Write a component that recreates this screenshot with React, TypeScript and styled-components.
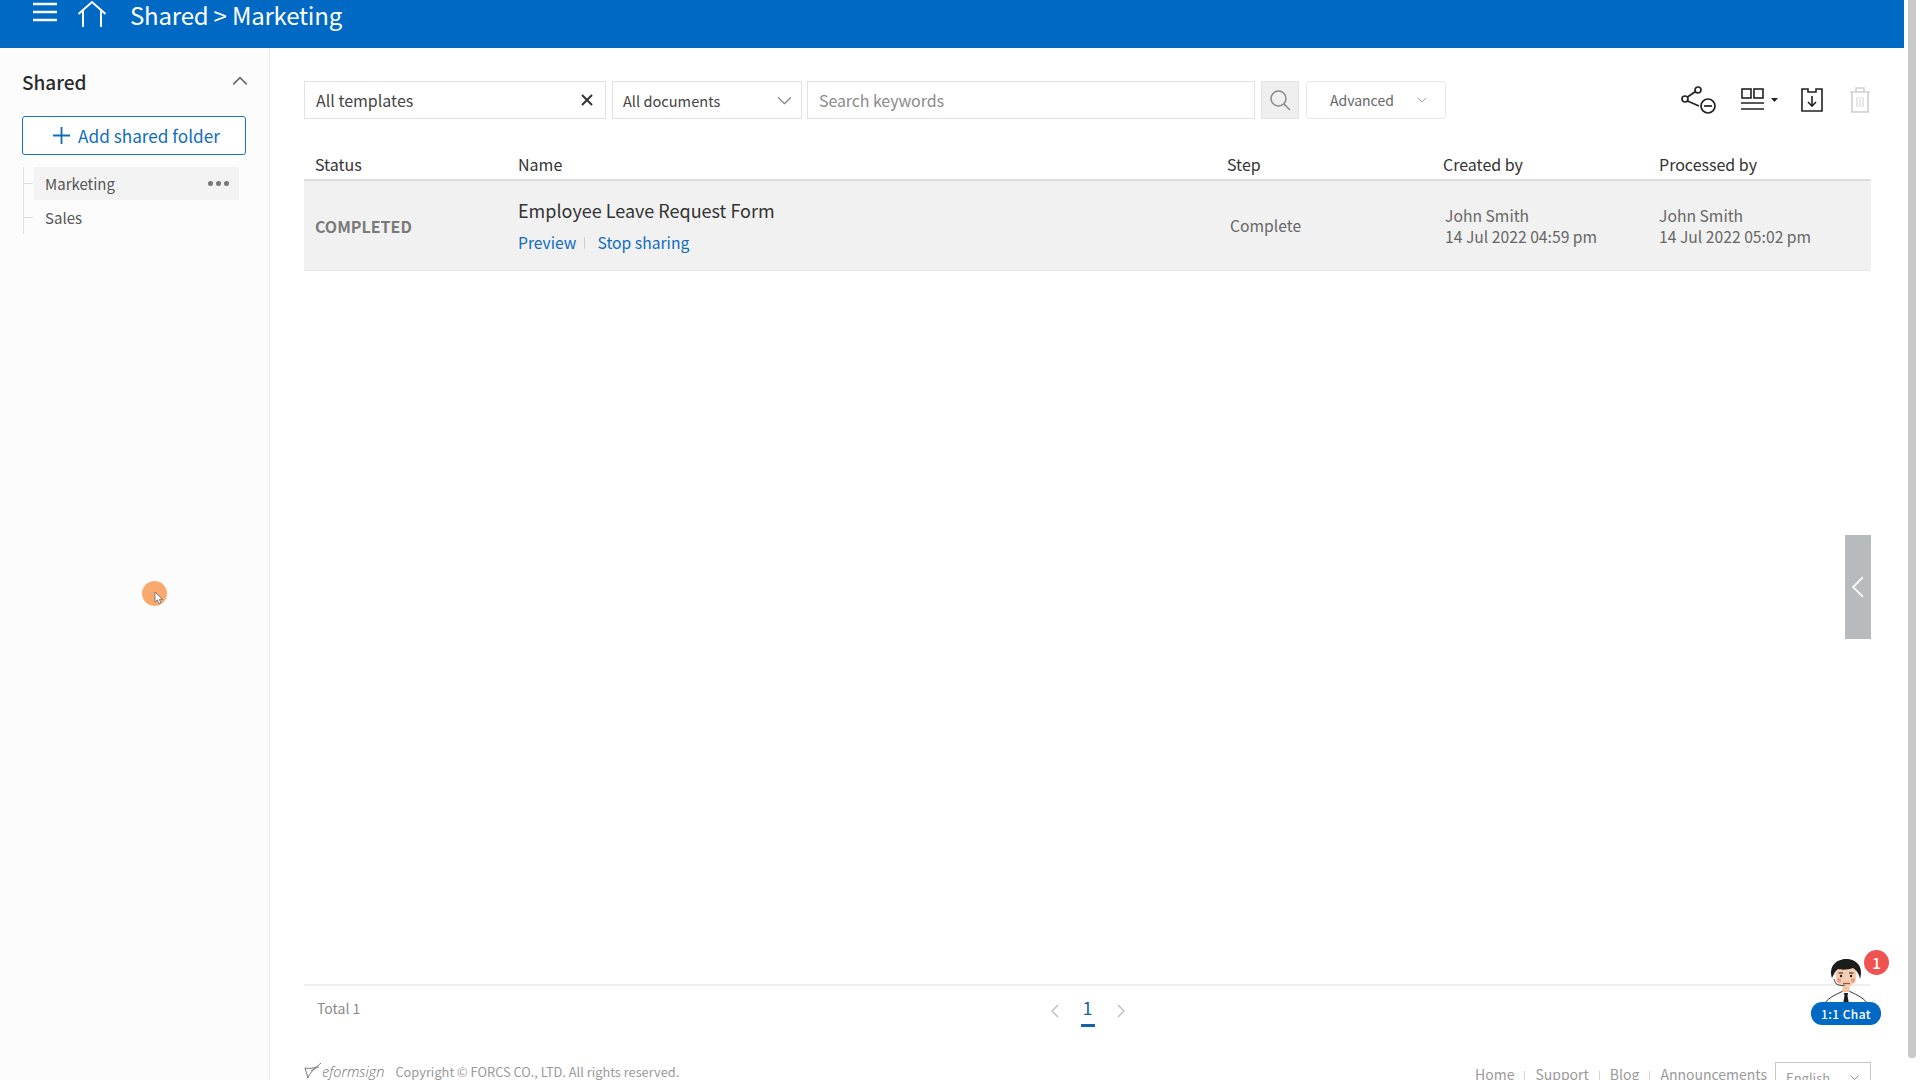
import React from 'react';
import styled, { createGlobalStyle } from 'styled-components';

const GlobalStyle = createGlobalStyle`
  html, body {
    margin: 0;
    height: 100%;
    overflow: hidden;
    background: #fff;
  }
  body, button, input {
    font-family: "Noto Sans CJK KR", "Noto Sans", sans-serif;
  }
  * {
    box-sizing: border-box;
  }
`;

const Page = styled.div`
  position: relative;
  display: flex;
  width: 1920px;
  height: 1080px;
  overflow: hidden;
  background: #fff;
`;

const Screen = styled.div`
  position: relative;
  flex: none;
  display: flex;
  flex-direction: column;
  width: 1904px;
  height: 1080px;
`;

const ScrollTrack = styled.div`
  flex: 1;
  padding: 0 4px 22px 4px;
  display: flex;
`;

const ScrollThumb = styled.div`
  flex: 1;
  background: #c9c9c9;
  border-radius: 0 0 3px 3px;
`;

const Header = styled.header`
  flex: none;
  height: 48px;
  background: #0069c3;
  display: flex;
  align-items: flex-start;
  padding-left: 33px;
  color: #fff;
`;

const HeaderIcon = styled.svg<{ $gap?: number }>`
  display: block;
  flex: none;
  margin-left: ${(p) => p.$gap ?? 0}px;
`;

const HeaderTitle = styled.h1`
  margin: 0 0 0 23px;
  font-size: 24px;
  font-weight: 400;
  line-height: 30px;
  letter-spacing: -0.2px;
`;

const Body = styled.div`
  flex: 1;
  min-height: 0;
  display: flex;
`;

const Sidebar = styled.aside`
  flex: none;
  width: 270px;
  background: #fcfcfc;
  border-right: 1px solid #ececec;
  padding: 21px 20px 0 22px;
`;

const SideHead = styled.div`
  display: flex;
  align-items: center;
  justify-content: space-between;
  height: 24px;
  margin-bottom: 23px;
`;

const SideTitle = styled.span`
  font-size: 19px;
  font-weight: 500;
  color: #2b2b2b;
`;

const AddButton = styled.button`
  display: flex;
  align-items: center;
  justify-content: center;
  gap: 8px;
  width: 224px;
  height: 39px;
  padding: 0 0 0 5px;
  background: #fff;
  border: 1px solid #1a73c0;
  border-radius: 3px;
  color: #0f6cbd;
  font-size: 17.2px;
`;

const Tree = styled.ul`
  list-style: none;
  margin: 12px 0 0 1px;
  padding: 0;
  border-left: 1px solid #e2e2e2;
  width: 216px;
`;

const TreeItem = styled.li<{ $active?: boolean }>`
  position: relative;
  display: flex;
  align-items: center;
  justify-content: space-between;
  height: 33px;
  margin: 0 0 1px 10px;
  padding: 0 10px 0 11px;
  font-size: 15px;
  color: #555;
  background: ${(p) => (p.$active ? '#f3f3f3' : 'transparent')};

  &:before {
    content: '';
    position: absolute;
    left: -10px;
    top: 16px;
    width: 9px;
    height: 1px;
    background: #dcdcdc;
  }
`;

const Dots = styled.span`
  display: flex;
  gap: 3px;
`;

const Dot = styled.i`
  display: block;
  width: 5px;
  height: 5px;
  border-radius: 50%;
  background: #777;
`;

const Main = styled.main`
  flex: 1;
  min-width: 0;
  display: flex;
  flex-direction: column;
  padding: 33px 33px 0 34px;
`;

const Toolbar = styled.div`
  flex: none;
  display: flex;
  align-items: center;
  height: 38px;
`;

const FilterBox = styled.div<{ $width: number; $gap: number; $size?: number; $pad?: number; $left?: number }>`
  flex: none;
  display: flex;
  align-items: center;
  justify-content: space-between;
  width: ${(p) => p.$width}px;
  height: 38px;
  margin-right: ${(p) => p.$gap}px;
  border: 1px solid #dfe3e5;
  background: #fff;
  padding: 0 ${(p) => p.$pad ?? 11}px 0 ${(p) => p.$left ?? 11}px;
  font-size: ${(p) => p.$size ?? 15}px;
  color: #444;
`;

const Placeholder = styled.span`
  font-size: 16px;
  letter-spacing: -0.1px;
  color: #8b8b8b;
`;

const SearchButton = styled.div`
  flex: none;
  display: flex;
  align-items: center;
  justify-content: center;
  width: 38px;
  height: 38px;
  margin-right: 7px;
  background: #efefef;
  border: 1px solid #e2e2e2;
`;

const AdvancedButton = styled.div`
  flex: none;
  display: flex;
  align-items: center;
  justify-content: space-between;
  width: 140px;
  height: 38px;
  padding: 0 18px 0 23px;
  border: 1px solid #e8e8e8;
  border-radius: 3px;
  font-size: 14px;
  color: #666;
`;

const ToolIcons = styled.div`
  margin-left: auto;
  display: flex;
  align-items: center;
`;

const ToolIcon = styled.svg<{ $gap?: number }>`
  display: block;
  flex: none;
  margin-left: ${(p) => p.$gap ?? 0}px;
`;

const Columns = styled.div`
  display: grid;
  grid-template-columns: 214px 709px 216px 216px 1fr;
  align-items: center;
`;

const TableHead = styled(Columns)`
  flex: none;
  margin-top: 25px;
  height: 37px;
  padding-top: 4px;
  border-bottom: 2px solid #dcdcdc;
  font-size: 16px;
  color: #333;
`;

const HeadCell = styled.div<{ $pad?: number }>`
  padding-left: ${(p) => p.$pad ?? 0}px;
`;

const Row = styled(Columns)`
  flex: none;
  height: 90px;
  background: #f1f1f1;
  border-bottom: 1px solid #e9e9e9;
  color: #666;
  font-size: 15.7px;
`;

const StatusCell = styled.div`
  padding-left: 11px;
  font-weight: 700;
  font-size: 16px;
  color: #7a7a7a;
`;

const NameCell = styled.div`
  display: flex;
  flex-direction: column;
  gap: 8px;
`;

const DocName = styled.div`
  font-size: 18px;
  line-height: 26px;
  color: #333;
`;

const Links = styled.div`
  display: flex;
  align-items: center;
  font-size: 15.7px;
  line-height: 24px;
  color: #0f6cbd;
`;

const LinkSep = styled.span`
  width: 1px;
  height: 12px;
  margin: 0 12px 0 8px;
  background: #cfcfcf;
`;

const TextCell = styled.div<{ $pad?: number }>`
  padding-left: ${(p) => p.$pad ?? 0}px;
  line-height: 21px;
`;

const Spacer = styled.div`
  flex: 1;
`;

const PagerBar = styled.div`
  flex: none;
  position: relative;
  display: grid;
  grid-template-columns: 1fr auto 1fr;
  align-items: flex-start;
  height: 72px;
  padding-top: 12px;
  border-top: 2px solid #efefef;
`;

const TotalText = styled.div`
  padding-left: 13px;
  font-size: 14px;
  line-height: 20px;
  color: #8a8a8a;
`;

const Pager = styled.div`
  display: flex;
  align-items: center;
  gap: 18px;
  height: 30px;
  margin-top: -2px;
`;

const PageNumber = styled.div`
  width: 14px;
  height: 32px;
  text-align: center;
  font-size: 18px;
  line-height: 24px;
  color: #0f63a8;
  border-bottom: 3px solid #0f63a8;
`;

const Footer = styled.footer`
  flex: none;
  display: flex;
  align-items: flex-start;
  justify-content: space-between;
  height: 24px;
  color: #8f8f8f;
`;

const Brand = styled.div`
  display: flex;
  align-items: center;
  height: 24px;
  padding-top: 6px;
  font-size: 12.8px;
  color: #9a9a9a;
`;

const BrandName = styled.span`
  font-family: "Open Sans", sans-serif;
  font-style: italic;
  font-weight: 300;
  font-size: 14.5px;
  color: #6f6f6f;
  margin: 0 11px 0 0;
`;

const FooterLinks = styled.nav`
  display: flex;
  align-items: flex-start;
  padding-top: 6px;
  font-size: 14px;
`;

const FooterLink = styled.span`
  line-height: 24px;
  color: #9a9a9a;
`;

const FooterSep = styled.i`
  display: block;
  width: 1px;
  height: 10px;
  margin: 9px 10px 0;
  background: #d4d4d4;
`;

const LangSelect = styled.div`
  display: flex;
  align-items: center;
  justify-content: space-between;
  width: 96px;
  height: 30px;
  margin: 0 0 0 8px;
  padding: 0 10px;
  border: 1px solid #c9c9c9;
  font-size: 13px;
  color: #9a9a9a;
`;

const PanelTab = styled.div`
  position: absolute;
  top: 535px;
  left: 1845px;
  width: 26px;
  height: 104px;
  display: flex;
  align-items: center;
  justify-content: center;
  background: #b6bbbe;
`;

const ChatWidget = styled.div`
  position: absolute;
  left: 1811px;
  top: 955px;
  width: 70px;
  height: 70px;
`;

const ChatFace = styled.svg`
  position: absolute;
  left: 11px;
  top: 3px;
`;

const ChatBadge = styled.div`
  position: absolute;
  left: 53px;
  top: -5px;
  width: 25px;
  height: 25px;
  border-radius: 50%;
  background: #ef5350;
  color: #fff;
  font-size: 15px;
  font-weight: 500;
  line-height: 25px;
  text-align: center;
`;

const ChatLabel = styled.div`
  position: absolute;
  left: 0;
  bottom: 0;
  width: 70px;
  height: 23px;
  border-radius: 11px;
  background: #0069c3;
  color: #fff;
  font-size: 12px;
  font-weight: 500;
  line-height: 23px;
  letter-spacing: 0.4px;
  text-align: center;
`;

const ClickDot = styled.div`
  position: absolute;
  left: 142px;
  top: 581px;
  width: 25px;
  height: 25px;
  border-radius: 50%;
  background: #f9a96e;
`;

const CursorMark = styled.svg`
  position: absolute;
  left: 12px;
  top: 11px;
`;

function Chevron({ size, dir, color, width = 1.4 }: { size: number; dir: 'up' | 'down' | 'left' | 'right'; color: string; width?: number }) {
  const paths = {
    up: 'M2 11 L8 5 L14 11',
    down: 'M2 5 L8 11 L14 5',
    left: 'M11 2 L5 8 L11 14',
    right: 'M5 2 L11 8 L5 14',
  };
  return (
    <svg width={size} height={size} viewBox="0 0 16 16" fill="none" stroke={color} strokeWidth={width}>
      <path d={paths[dir]} />
    </svg>
  );
}

function SideTree() {
  return (
    <Tree>
      <TreeItem $active>
        Marketing
        <Dots>
          <Dot />
          <Dot />
          <Dot />
        </Dots>
      </TreeItem>
      <TreeItem>Sales</TreeItem>
    </Tree>
  );
}

export default function App() {
  return (
    <>
      <GlobalStyle />
      <Page>
        <Screen>
          <Header>
            <HeaderIcon width="24" height="24" viewBox="0 0 24 24" stroke="#fff" strokeWidth="2.4" fill="none">
              <path d="M0 4 H24 M0 12 H24 M0 20 H24" />
            </HeaderIcon>
            <HeaderIcon $gap={20} width="30" height="28" viewBox="0 0 30 28" stroke="#fff" strokeWidth="2" fill="none">
              <path d="M1.5 14 L15 2 L28.5 14 M6 11 V27 M24 11 V27" />
            </HeaderIcon>
            <HeaderTitle>Shared &gt; Marketing</HeaderTitle>
          </Header>
          <Body>
            <Sidebar>
              <SideHead>
                <SideTitle>Shared</SideTitle>
                <Chevron size={18} dir="up" color="#666" />
              </SideHead>
              <AddButton>
                <svg width="17" height="17" viewBox="0 0 17 17" stroke="#0f6cbd" strokeWidth="1.8">
                  <path d="M8.5 0 V17 M0 8.5 H17" />
                </svg>
                Add shared folder
              </AddButton>
              <SideTree />
            </Sidebar>
            <Main>
              <Toolbar>
                <FilterBox $width={302} $gap={6} $size={16} $pad={12}>
                  All templates
                  <svg width="12" height="12" viewBox="0 0 12 12" stroke="#333" strokeWidth="2">
                    <path d="M1 1 L11 11 M11 1 L1 11" />
                  </svg>
                </FilterBox>
                <FilterBox $width={190} $gap={5} $size={14.6} $pad={8} $left={10}>
                  All documents
                  <Chevron size={17} dir="down" color="#777" width={1.1} />
                </FilterBox>
                <FilterBox $width={448} $gap={6}>
                  <Placeholder>Search keywords</Placeholder>
                </FilterBox>
                <SearchButton>
                  <svg width="24" height="24" viewBox="0 0 24 24" fill="none" stroke="#8a8a8a" strokeWidth="1.5">
                    <circle cx="10.5" cy="10.5" r="7.5" />
                    <path d="M16 16 L22 22" />
                  </svg>
                </SearchButton>
                <AdvancedButton>
                  Advanced
                  <Chevron size={10} dir="down" color="#888" />
                </AdvancedButton>
                <ToolIcons>
                  <ToolIcon width="36" height="28" viewBox="0 0 36 28" fill="none" stroke="#222" strokeWidth="1.7">
                    <circle cx="4" cy="13" r="3" />
                    <circle cx="17" cy="4" r="3" />
                    <circle cx="27" cy="20" r="7" />
                    <path d="M6.5 11 L14.5 5.5 M6.5 15 L18 20" />
                    <path d="M23 20 H31" />
                  </ToolIcon>
                  <ToolIcon $gap={24} width="38" height="26" viewBox="0 0 38 26" fill="none" stroke="#222" strokeWidth="1.6">
                    <rect x="1" y="2" width="9" height="9" />
                    <rect x="13" y="2" width="9" height="9" />
                    <path d="M0 16 H23 M0 22 H23" />
                    <path d="M30 11 H37 L33.5 15 Z" fill="#222" stroke="none" />
                  </ToolIcon>
                  <ToolIcon $gap={22} width="22" height="24" viewBox="0 0 22 24" fill="none" stroke="#222" strokeWidth="1.6">
                    <path d="M7 1 H1 V23 H21 V1 H15 V4 H7 Z" />
                    <path d="M11 8 V18 M7 14 L11 18 L15 14" />
                  </ToolIcon>
                  <ToolIcon $gap={26} width="22" height="26" viewBox="0 0 22 26" fill="none" stroke="#cfcfcf" strokeWidth="1.6">
                    <path d="M1 5 H21 M7 5 V1 H15 V5" />
                    <path d="M3 5 V25 H19 V5" />
                    <path d="M8 10 V20 M11 10 V20 M14 10 V20" strokeWidth="1" />
                  </ToolIcon>
                </ToolIcons>
              </Toolbar>
              <TableHead>
                <HeadCell $pad={11}>Status</HeadCell>
                <HeadCell>Name</HeadCell>
                <HeadCell>Step</HeadCell>
                <HeadCell>Created by</HeadCell>
                <HeadCell>Processed by</HeadCell>
              </TableHead>
              <Row>
                <StatusCell>COMPLETED</StatusCell>
                <NameCell>
                  <DocName>Employee Leave Request Form</DocName>
                  <Links>
                    Preview
                    <LinkSep />
                    Stop sharing
                  </Links>
                </NameCell>
                <TextCell $pad={3}>Complete</TextCell>
                <TextCell $pad={2}>
                  John Smith
                  <br />
                  14 Jul 2022 04:59 pm
                </TextCell>
                <TextCell>
                  John Smith
                  <br />
                  14 Jul 2022 05:02 pm
                </TextCell>
              </Row>
              <Spacer />
              <PagerBar>
                <TotalText>Total 1</TotalText>
                <Pager>
                  <Chevron size={16} dir="left" color="#bdbdbd" />
                  <PageNumber>1</PageNumber>
                  <Chevron size={16} dir="right" color="#bdbdbd" />
                </Pager>
              </PagerBar>
              <Footer>
                <Brand>
                  <svg width="18" height="18" viewBox="0 0 18 18" fill="none" stroke="#777" strokeWidth="1">
                    <path d="M1 6 L4 16 M1 6 C6 7 10 6 12 5 M4 16 C5 12 9 8 17 1 M7 9 C10 7 13 5 15 5" />
                  </svg>
                  <BrandName>eformsign</BrandName>
                  Copyright © FORCS CO., LTD. All rights reserved.
                </Brand>
                <FooterLinks>
                  <FooterLink>Home</FooterLink>
                  <FooterSep />
                  <FooterLink>Support</FooterLink>
                  <FooterSep />
                  <FooterLink>Blog</FooterLink>
                  <FooterSep />
                  <FooterLink>Announcements</FooterLink>
                  <LangSelect>
                    English
                    <Chevron size={11} dir="down" color="#888" />
                  </LangSelect>
                </FooterLinks>
              </Footer>
            </Main>
          </Body>
          <PanelTab>
            <Chevron size={28} dir="left" color="#f4f6f7" width={1.2} />
          </PanelTab>
          <ChatWidget>
            <ChatFace width="48" height="48" viewBox="0 0 48 48" fill="none">
              <path d="M2 46 C8 38 16 36 21 33 H27 C32 36 40 38 46 46 Z" fill="#fff" stroke="#333" strokeWidth="1" />
              <path d="M22 35 H26 L25.5 38 L27 46 H21 L22.5 38 Z" fill="#1c1c1c" />
              <rect x="20.5" y="26" width="7" height="8" fill="#f0c4a4" />
              <ellipse cx="24" cy="17" rx="10.5" ry="12.5" fill="#f5cdb0" />
              <path d="M10 20 C6 7 16 1 24 1 C34 1 42 8 38 21 C37 15 34 12 31 10 C26 12 19 12 16 11 C13 13 12 16 10 20 Z" fill="#1c1c1c" />
              <path d="M16.5 15 H21 M27 15 H31.5" stroke="#222" strokeWidth="1.2" />
              <circle cx="19" cy="18" r="1.2" fill="#222" />
              <circle cx="29" cy="18" r="1.2" fill="#222" />
              <circle cx="17" cy="22.5" r="2.2" fill="#ef9a7c" />
              <circle cx="31" cy="22.5" r="2.2" fill="#ef9a7c" />
              <path d="M12 21 C13 27 18 28.5 23 27" stroke="#555" strokeWidth="1.1" />
              <path d="M21 25.5 H28" stroke="#a3543d" strokeWidth="1.3" />
            </ChatFace>
            <ChatBadge>1</ChatBadge>
            <ChatLabel>1:1 Chat</ChatLabel>
          </ChatWidget>
          <ClickDot>
            <CursorMark width="9" height="13" viewBox="0 0 9 13">
              <path d="M1 0 V10 L3.4 8 L5 12 L7 11 L5.4 7.6 L8.5 7.4 Z" fill="#fff" stroke="#666" strokeWidth="0.8" />
            </CursorMark>
          </ClickDot>
        </Screen>
        <ScrollTrack>
          <ScrollThumb />
        </ScrollTrack>
      </Page>
    </>
  );
}
